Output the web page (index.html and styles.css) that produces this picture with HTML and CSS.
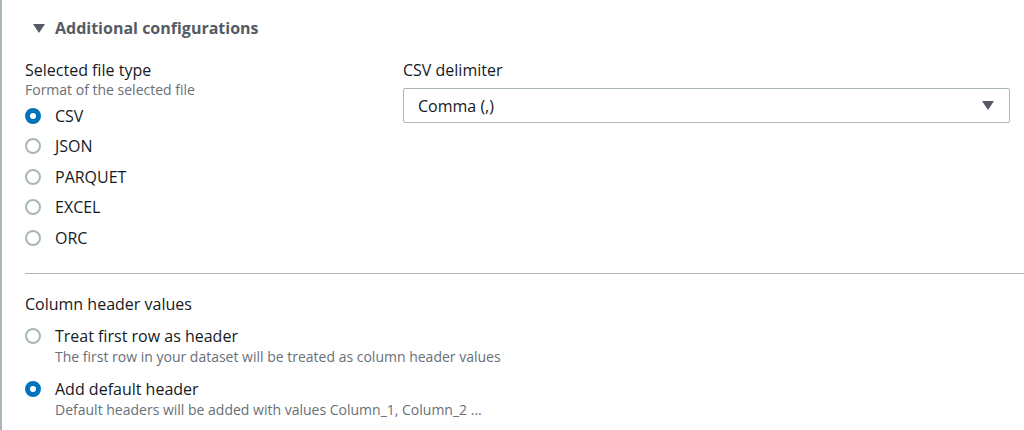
FILE: index.html
```html
<!DOCTYPE html>
<html lang="en">
<head>
    <meta charset="UTF-8">
    <title>Additional configurations</title>
    <link rel="stylesheet" href="styles.css">
</head>
<body>
    <div class="panel">
        <div class="expander">
            <span class="caret"></span>
            <span class="expander-title">Additional configurations</span>
        </div>

        <div class="columns">
            <div class="field">
                <div class="field-label">Selected file type</div>
                <div class="field-desc">Format of the selected file</div>
                <div class="radio-group">
                    <label class="radio"><span class="dot checked"></span>CSV</label>
                    <label class="radio"><span class="dot"></span>JSON</label>
                    <label class="radio"><span class="dot"></span>PARQUET</label>
                    <label class="radio"><span class="dot"></span>EXCEL</label>
                    <label class="radio"><span class="dot"></span>ORC</label>
                </div>
            </div>

            <div class="field">
                <div class="field-label">CSV delimiter</div>
                <div class="select">
                    <span>Comma (,)</span>
                    <span class="select-caret"></span>
                </div>
            </div>
        </div>

        <hr class="divider">

        <div class="field">
            <div class="field-label">Column header values</div>
            <div class="option">
                <span class="dot"></span>
                <div>
                    <div class="option-title">Treat first row as header</div>
                    <div class="option-desc">The first row in your dataset will be treated as column header values</div>
                </div>
            </div>
            <div class="option">
                <span class="dot checked"></span>
                <div>
                    <div class="option-title">Add default header</div>
                    <div class="option-desc">Default headers will be added with values Column_1, Column_2 ...</div>
                </div>
            </div>
        </div>
    </div>
</body>
</html>
```

FILE: styles.css
```css
* {
    padding: 0;
    margin: 0;
    box-sizing: border-box;
}

body {
    font-family: 'Open Sans', 'Liberation Sans', sans-serif;
    color: #16191f;
    background: #fff;
}

.panel {
    border-left: 2px solid #aab7b8;
    padding-left: 23px;
    min-height: 430px;
}

.expander {
    display: flex;
    align-items: center;
    padding-top: 16px;
    height: 40px;
    color: #545b64;
}

.caret {
    width: 0;
    height: 0;
    margin-left: 8px;
    margin-right: 10px;
    border-left: 6px solid transparent;
    border-right: 6px solid transparent;
    border-top: 9px solid #545b64;
}

.expander-title {
    font-size: 16px;
    font-weight: bold;
    line-height: 24px;
}

.columns {
    display: grid;
    grid-template-columns: 358px 1fr;
    gap: 20px;
    padding-top: 20px;
    padding-right: 14px;
}

.field-label {
    font-size: 16px;
    line-height: 20px;
}

.field-desc {
    font-size: 14px;
    line-height: 20px;
    color: #687078;
}

.radio-group {
    padding-top: 0.5px;
}

.radio {
    display: flex;
    align-items: center;
    height: 30.5px;
    font-size: 16px;
}

.dot {
    flex: none;
    width: 16px;
    height: 16px;
    border-radius: 50%;
    border: 2px solid #aab7b8;
    margin-right: 14px;
    background: #fff;
}

.dot.checked {
    border: 5px solid #0073bb;
}

.select {
    display: flex;
    align-items: center;
    justify-content: space-between;
    margin-top: 8px;
    height: 35px;
    border: 1px solid #aab7b8;
    border-radius: 2px;
    padding: 0 15px 0 14px;
    font-size: 16px;
}

.select-caret {
    width: 0;
    height: 0;
    border-left: 6.5px solid transparent;
    border-right: 6.5px solid transparent;
    border-top: 9px solid #545b64;
}

.divider {
    border: none;
    border-top: 1px solid #aab7b8;
    margin: 20px 0 20px;
}

.option {
    display: flex;
    align-items: flex-start;
    margin-top: 12px;
}

.option .dot {
    margin-top: 2px;
}

.option-title {
    font-size: 16px;
    line-height: 20px;
}

.option-desc {
    font-size: 14px;
    line-height: 20px;
    color: #687078;
    margin-top: 1px;
}
```
